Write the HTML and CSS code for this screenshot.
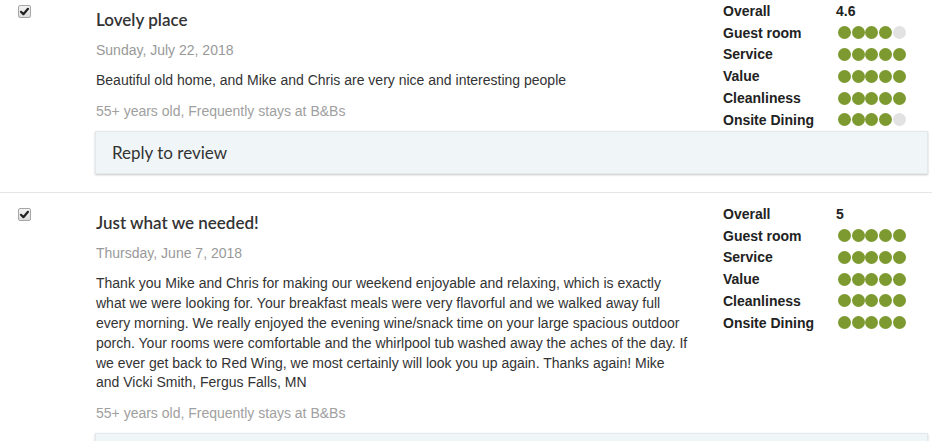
FILE: index.html
```html
<!DOCTYPE html>
<html>
<head>
<meta charset="utf-8">
<link rel="stylesheet" href="styles.css">
</head>
<body>
<div class="reviews">
  <section class="review">
    <div class="check-col"><span class="checkbox"><svg viewBox="0 0 13 13" width="13" height="13"><path d="M3 6.8 L5.4 9.2 L10 3.8" fill="none" stroke="#222" stroke-width="2.2" stroke-linecap="round" stroke-linejoin="round"/></svg></span></div>
    <div class="body-col">
      <div class="main">
        <div class="content">
          <h2 class="title">Lovely place</h2>
          <div class="date">Sunday, July 22, 2018</div>
          <p class="text">Beautiful old home, and Mike and Chris are very nice and interesting people</p>
          <div class="meta">55+ years old, Frequently stays at B&amp;Bs</div>
        </div>
        <div class="ratings">
          <div class="rrow"><span class="label">Overall</span><span class="value">4.6</span></div>
          <div class="rrow"><span class="label">Guest room</span><span class="dots"><i class="dot"></i><i class="dot"></i><i class="dot"></i><i class="dot"></i><i class="dot off"></i></span></div>
          <div class="rrow"><span class="label">Service</span><span class="dots"><i class="dot"></i><i class="dot"></i><i class="dot"></i><i class="dot"></i><i class="dot"></i></span></div>
          <div class="rrow"><span class="label">Value</span><span class="dots"><i class="dot"></i><i class="dot"></i><i class="dot"></i><i class="dot"></i><i class="dot"></i></span></div>
          <div class="rrow"><span class="label">Cleanliness</span><span class="dots"><i class="dot"></i><i class="dot"></i><i class="dot"></i><i class="dot"></i><i class="dot"></i></span></div>
          <div class="rrow"><span class="label">Onsite Dining</span><span class="dots"><i class="dot"></i><i class="dot"></i><i class="dot"></i><i class="dot"></i><i class="dot off"></i></span></div>
        </div>
      </div>
      <div class="reply">Reply to review</div>
    </div>
  </section>
  <section class="review">
    <div class="check-col"><span class="checkbox"><svg viewBox="0 0 13 13" width="13" height="13"><path d="M3 6.8 L5.4 9.2 L10 3.8" fill="none" stroke="#222" stroke-width="2.2" stroke-linecap="round" stroke-linejoin="round"/></svg></span></div>
    <div class="body-col">
      <div class="main">
        <div class="content">
          <h2 class="title">Just what we needed!</h2>
          <div class="date">Thursday, June 7, 2018</div>
          <p class="text">Thank you Mike and Chris for making our weekend enjoyable and relaxing, which is exactly what we were looking for. Your breakfast meals were very flavorful and we walked away full every morning. We really enjoyed the evening wine/snack time on your large spacious outdoor porch. Your rooms were comfortable and the whirlpool tub washed away the aches of the day. If we ever get back to Red Wing, we most certainly will look you up again. Thanks again! Mike and Vicki Smith, Fergus Falls, MN</p>
          <div class="meta">55+ years old, Frequently stays at B&amp;Bs</div>
        </div>
        <div class="ratings">
          <div class="rrow"><span class="label">Overall</span><span class="value">5</span></div>
          <div class="rrow"><span class="label">Guest room</span><span class="dots"><i class="dot"></i><i class="dot"></i><i class="dot"></i><i class="dot"></i><i class="dot"></i></span></div>
          <div class="rrow"><span class="label">Service</span><span class="dots"><i class="dot"></i><i class="dot"></i><i class="dot"></i><i class="dot"></i><i class="dot"></i></span></div>
          <div class="rrow"><span class="label">Value</span><span class="dots"><i class="dot"></i><i class="dot"></i><i class="dot"></i><i class="dot"></i><i class="dot"></i></span></div>
          <div class="rrow"><span class="label">Cleanliness</span><span class="dots"><i class="dot"></i><i class="dot"></i><i class="dot"></i><i class="dot"></i><i class="dot"></i></span></div>
          <div class="rrow"><span class="label">Onsite Dining</span><span class="dots"><i class="dot"></i><i class="dot"></i><i class="dot"></i><i class="dot"></i><i class="dot"></i></span></div>
        </div>
      </div>
      <div class="reply">Reply to review</div>
    </div>
  </section>
</div>
</body>
</html>
```
FILE: styles.css
```css
html, body {
  margin: 0;
  padding: 0;
  background: #fff;
  font-family: "Liberation Sans", Arial, sans-serif;
  color: #333;
}
.reviews {
  display: flex;
  flex-direction: column;
}
.review {
  display: grid;
  grid-template-columns: 95px 1fr;
  padding-bottom: 18px;
  border-bottom: 1px solid #e6e6e6;
  margin-bottom: 10px;
}
.check-col {
  padding: 5px 0 0 18px;
}
.checkbox {
  display: block;
  width: 13px;
  height: 13px;
  box-sizing: border-box;
  border: 1px solid #a6a6a6;
  border-radius: 2px;
  background: linear-gradient(#f2f2f2, #dcdcdc);
  position: relative;
}
.checkbox svg {
  position: absolute;
  left: -1px;
  top: -1px;
}
.body-col {
  display: flex;
  flex-direction: column;
}
.main {
  display: flex;
}
.content {
  flex: 1;
  padding: 0 34px 10px 1px;
}
.title {
  margin: 8px 0 0;
  font-family: Lato, "Open Sans", sans-serif;
  font-size: 17px;
  font-weight: 600;
  line-height: 24px;
  color: #333;
}
.date {
  margin-top: 8px;
  font-size: 14px;
  line-height: 20px;
  color: #999;
}
.text {
  margin: 11px 0 0;
  font-size: 14px;
  line-height: 19.9px;
  color: #333;
}
.meta {
  margin-top: 10px;
  font-size: 14px;
  line-height: 20px;
  color: #a0a0a0;
}
.ratings {
  width: 209px;
  flex: none;
}
.rrow {
  display: flex;
  align-items: center;
  height: 21.8px;
  font-size: 14px;
  font-weight: bold;
  color: #222;
}
.label {
  width: 113px;
  flex: none;
}
.value {
  color: #222;
}
.dots {
  display: flex;
  gap: 0.7px;
  padding-left: 2px;
}
.dot {
  display: block;
  width: 13px;
  height: 13px;
  border-radius: 50%;
  background: #7c9a30;
}
.dot.off {
  background: #e2e2e2;
}
.reply {
  margin: 0 4px 0 0;
  height: 43px;
  box-sizing: border-box;
  display: flex;
  align-items: center;
  padding-left: 16px;
  background: #f0f5f8;
  border: 1px solid #e2e8eb;
  box-shadow: 0 1px 2px rgba(0, 0, 0, 0.22);
  font-family: Lato, "Liberation Sans", sans-serif;
  font-size: 17px;
  color: #333;
}
```
